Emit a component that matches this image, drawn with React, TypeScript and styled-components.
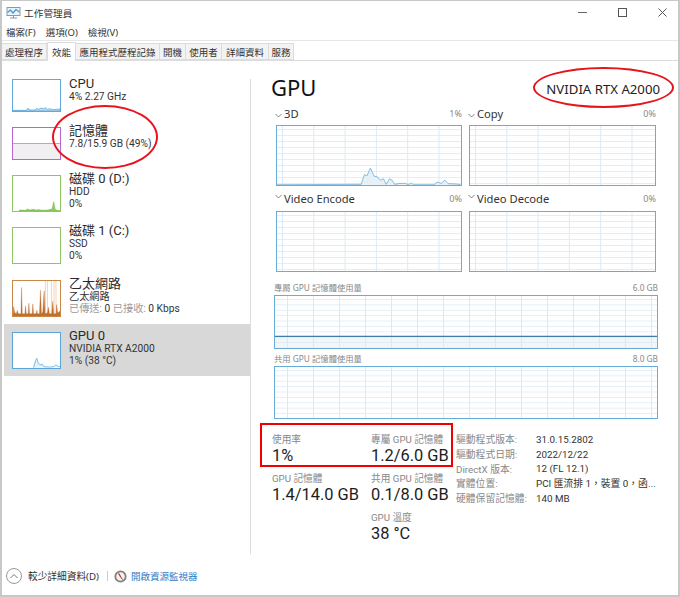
import React from "react";
import styled, { createGlobalStyle } from "styled-components";

const Global = createGlobalStyle`
  html, body { margin: 0; padding: 0; background: #fff; }
  * { box-sizing: border-box; }
  body { font-family: "Noto Sans", "Noto Sans CJK TC", sans-serif; color: #222; }
`;

const compactFont = `Roboto, "Noto Sans CJK TC", sans-serif`;

const Windowed = styled.div`
  position: relative;
  width: 680px;
  height: 597px;
  border: 1px solid #c8c8c8;
  border-width: 1px 2px 2px 2px;
  display: flex;
  flex-direction: column;
  overflow: hidden;
  background: #fff;
`;
const TitleBar = styled.div`
  height: 23px;
  display: flex;
  align-items: center;
  padding: 0 0 0 4px;
  gap: 3px;
  font-size: 9.6px;
  color: #333;
`;
const TitleText = styled.span`
  flex: 1;
  letter-spacing: 0.1px;
`;
const WinButton = styled.span`
  width: 37px;
  padding-left: 5px;
  display: flex;
  justify-content: center;
  color: #555;
`;
const MenuBar = styled.div`
  height: 16px;
  display: flex;
  align-items: center;
  gap: 10px;
  padding-left: 4px;
  font-size: 9.5px;
  color: #333;
  border-bottom: 1px solid #e6e6e6;
  box-sizing: content-box;
  padding-bottom: 0;
`;
const TabBar = styled.div`
  height: 20px;
  display: flex;
  align-items: flex-end;
  border-bottom: 1px solid #dcdcdc;
  padding-left: 0;
`;
const Tab = styled.div<{ $active?: boolean; $w: number }>`
  width: ${(p) => p.$w}px;
  height: ${(p) => (p.$active ? 19 : 17)}px;
  margin-bottom: ${(p) => (p.$active ? -1 : 0)}px;
  background: ${(p) => (p.$active ? "#fff" : "#f3f3f3")};
  border: 1px solid #dcdcdc;
  border-left-width: ${(p) => (p.$active ? 1 : 0)}px;
  border-bottom-width: ${(p) => (p.$active ? 0 : 1)}px;
  font-size: 9.5px;
  color: #333;
  display: flex;
  align-items: center;
  justify-content: center;
  white-space: nowrap;
`;
const Body = styled.div`
  flex: 1;
  display: flex;
  min-height: 0;
`;
const Sidebar = styled.div`
  width: 248px;
  padding: 11px 0 0 2px;
  display: flex;
  flex-direction: column;
`;
const Row = styled.div<{ $h: number; $selected?: boolean }>`
  height: ${(p) => p.$h}px;
  display: flex;
  align-items: center;
  gap: 8px;
  padding-left: 8px;
  background: ${(p) => (p.$selected ? "#d8d8d8" : "transparent")};
`;
const Thumb = styled.div<{ $c: string; $h: number }>`
  width: 49px;
  height: ${(p) => p.$h}px;
  border: 1px solid ${(p) => p.$c};
  background: #fff;
  flex: none;
  svg { display: block; width: 100%; height: 100%; }
`;
const RowText = styled.div`
  display: flex;
  flex-direction: column;
  min-width: 0;
  align-self: flex-start;
  padding-top: 4px;
  font-family: ${compactFont};
`;
const RowName = styled.div`
  font-size: 13px;
  line-height: 15px;
  color: #2a2a2a;
`;
const RowSub = styled.div`
  font-size: 10.2px;
  line-height: 12.4px;
  color: #333;
  white-space: nowrap;
`;
const Muted = styled.span`
  color: #999;
`;
const Divider = styled.div`
  width: 1px;
  height: 475px;
  margin-top: 18px;
  background: #dcdcdc;
  flex: none;
`;
const Main = styled.div`
  flex: 1;
  padding: 7px 18px 0 20px;
  display: flex;
  flex-direction: column;
`;
const Header = styled.div`
  height: 38px;
  display: flex;
  justify-content: space-between;
  align-items: center;
`;
const Heading = styled.div`
  font-size: 22px;
  color: #111;
  line-height: 30px;
`;
const Adapter = styled.div`
  font-size: 13.2px;
  color: #222;
  padding-top: 3px;
`;
const ChartGrid = styled.div`
  display: grid;
  grid-template-columns: 186px 187px;
  column-gap: 7px;
  margin-left: 5px;
`;
const ChartHead = styled.div<{ $tall?: boolean }>`
  height: ${(p) => (p.$tall ? 25 : 19)}px;
  display: flex;
  align-items: ${(p) => (p.$tall ? "flex-end" : "flex-start")};
  padding-bottom: ${(p) => (p.$tall ? 5 : 0)}px;
  margin-left: -1px;
  gap: 2px;
  font-size: 11.2px;
  line-height: 15px;
  color: #333;
`;
const ChevronBox = styled.span`
  display: flex;
  align-self: center;
`;
const ChartName = styled.span`
  flex: 1;
`;
const Pct = styled.span`
  font-size: 9px;
  color: #888;
`;
const Chart = styled.div<{ $h: number; $cx: number; $cy: number; $ox: number }>`
  height: ${(p) => p.$h}px;
  border: 1px solid #68acd8;
  background-color: #fff;
  background-image:
    linear-gradient(to right, #d9eaf6 1px, transparent 1px),
    linear-gradient(to bottom, #e1eef8 1px, transparent 1px);
  background-size: ${(p) => p.$cx}px 100%, 100% ${(p) => p.$cy}px;
  background-position: ${(p) => p.$ox}px 0, 0 3px;
  svg { display: block; width: 100%; height: 100%; }
`;
const WideHead = styled.div`
  display: flex;
  justify-content: space-between;
  align-items: flex-end;
  height: 16px;
  padding-bottom: 2px;
  font-size: 8.3px;
  color: #888;
`;
const WideGroup = styled.div<{ $mt: number }>`
  margin: ${(p) => p.$mt}px 2px 0 3px;
`;
const Stats = styled.div`
  margin-top: 14px;
  margin-left: 1px;
  display: flex;
  font-family: ${compactFont};
`;
const StatGrid = styled.div`
  width: 184px;
  display: grid;
  grid-template-columns: 99px 85px;
  grid-auto-rows: 39px;
`;
const Stat = styled.div`
  display: flex;
  flex-direction: column;
`;
const StatLabel = styled.div`
  font-size: 9.7px;
  line-height: 13px;
  color: #888;
  white-space: nowrap;
`;
const StatValue = styled.div`
  font-size: 16.4px;
  line-height: 19px;
  color: #1c1c1c;
  white-space: nowrap;
`;
const Info = styled.div`
  display: grid;
  grid-template-columns: 80px 1fr;
  grid-auto-rows: 14.7px;
  font-size: 9.8px;
  align-items: center;
  margin-top: -1px;
`;
const InfoKey = styled.div`
  color: #888;
  white-space: nowrap;
`;
const InfoVal = styled.div`
  color: #333;
  white-space: nowrap;
`;
const Footer = styled.div`
  height: 38px;
  display: flex;
  align-items: center;
  padding: 0 0 0 4px;
  font-size: 9.7px;
  color: #333;
  flex: none;
`;
const ExpandCircle = styled.span`
  width: 16px;
  height: 16px;
  border: 1px solid #999;
  border-radius: 50%;
  display: flex;
  align-items: center;
  justify-content: center;
  margin-right: 6px;
`;
const FootSep = styled.span`
  width: 1px;
  height: 10px;
  background: #ccc;
  margin: 0 6px 0 8px;
`;
const FootLink = styled.span`
  color: #2f79c4;
  font-size: 9.5px;
  margin-left: 4px;
`;
const Ellipse = styled.div<{ $x: number; $y: number; $w: number; $h: number }>`
  position: absolute;
  left: ${(p) => p.$x}px;
  top: ${(p) => p.$y}px;
  width: ${(p) => p.$w}px;
  height: ${(p) => p.$h}px;
  border: 2px solid #e8141c;
  border-radius: 50%;
`;
const RedBox = styled.div`
  position: absolute;
  left: 258px;
  top: 422px;
  width: 193px;
  height: 44px;
  border: 2px solid #f00000;
`;

const Chevron = () => (
  <ChevronBox>
    <svg width="7" height="7" viewBox="0 0 7 7" fill="none" stroke="#777" strokeWidth="0.9">
      <path d="M0.5 2 L3.5 5 L6.5 2" />
    </svg>
  </ChevronBox>
);

const spark3d =
  "M47 376 L302 375 L312 345 L320 348 L330 325 L342 350 L352 352 L360 362 L370 358 L378 375 L388 358 L396 362 L404 375 L420 372 L436 372 L445 376 L455 371 L460 376 L525 376 L532 368 L545 372 L556 362 L566 373 L590 374 L604 376";

const Thumbs = {
  cpu: (
    <svg viewBox="0 0 142 94" preserveAspectRatio="none">
      <path d="M0 92 L40 92 L46 85 L50 91 L66 91 L72 86 L78 89 L84 85 L92 87 L98 84 L104 89 L112 87 L120 90 L142 88 L142 94 L0 94 Z" fill="#bcdcf0" stroke="#4a9fd4" strokeWidth="2" />
    </svg>
  ),
  mem: (
    <svg viewBox="0 0 142 94" preserveAspectRatio="none">
      <rect x="0" y="47" width="142" height="47" fill="#f2eff3" />
      <path d="M0 47 L142 47" stroke="#b267cb" strokeWidth="2" fill="none" />
    </svg>
  ),
  disk0: (
    <svg viewBox="0 0 142 106" preserveAspectRatio="none">
      <path d="M18 105 L22 103 L38 104 L44 100 L50 103 L62 101 L68 103 L78 102 L90 104 L105 103 L118 100 L123 78 L127 100 L132 104 L142 105 L142 106 L18 106 Z" fill="#8fcb5e" stroke="#6fb83f" strokeWidth="1.5" />
    </svg>
  ),
  disk1: <svg viewBox="0 0 142 106" />,
  eth: (
    <svg viewBox="0 0 142 107" preserveAspectRatio="none">
      <path d="M98 0 V107 M104 0 V107 M116 0 V107 M124 0 V107 M130 0 V107" stroke="#eebd95" strokeWidth="2" fill="none" />
      <path
        d="M0 107 L2 78 L5 96 L10 100 L13 90 L16 100 L24 100 L26 20 L28 100 L36 100 L38 76 L40 100 L46 100 L48 68 L50 100 L58 100 L60 70 L62 100 L70 100 L72 90 L74 100 L80 100 L83 28 L86 100 L90 95 L94 30 L97 100 L104 98 L107 80 L110 100 L117 100 L120 62 L123 100 L130 100 L132 72 L135 98 L142 92 L142 107 Z"
        fill="#c3702c"
        stroke="#b9652a"
        strokeWidth="1"
      />
    </svg>
  ),
  gpu: (
    <svg viewBox="0 0 142 108" preserveAspectRatio="none">
      <path d="M62 107 L68 85 L72 78 L76 92 L82 98 L88 96 L94 104 L110 105 L124 104 L130 98 L134 102 L142 105" fill="#e3f0f9" stroke="#4a9fd4" strokeWidth="2" />
    </svg>
  ),
};

const items = [
  { h: 47, th: 33, c: "#62a9da", t: Thumbs.cpu, name: "CPU", subs: ["4%  2.27 GHz"] },
  { h: 48, th: 33, c: "#b867d0", t: Thumbs.mem, name: "記憶體", subs: ["7.8/15.9 GB (49%)"] },
  { h: 52, th: 37, c: "#8cc764", t: Thumbs.disk0, name: "磁碟 0 (D:)", subs: ["HDD", "0%"] },
  { h: 53, th: 37, c: "#8cc764", t: Thumbs.disk1, name: "磁碟 1 (C:)", subs: ["SSD", "0%"] },
  { h: 52, th: 37, c: "#c98748", t: Thumbs.eth, name: "乙太網路", subs: ["乙太網路"], eth: true },
  { h: 52, th: 37, c: "#5aa6d8", t: Thumbs.gpu, name: "GPU 0", subs: ["NVIDIA RTX A2000", "1%  (38 °C)"], selected: true },
];

const engines = [
  { name: "3D", pct: "1%", spark: true },
  { name: "Copy", pct: "0%" },
  { name: "Video Encode", pct: "0%" },
  { name: "Video Decode", pct: "0%" },
];

const stats = [
  ["使用率", "1%"],
  ["專屬 GPU 記憶體", "1.2/6.0 GB"],
  ["GPU 記憶體", "1.4/14.0 GB"],
  ["共用 GPU 記憶體", "0.1/8.0 GB"],
  ["", ""],
  ["GPU 溫度", "38 °C"],
];

const info = [
  ["驅動程式版本:", "31.0.15.2802"],
  ["驅動程式日期:", "2022/12/22"],
  ["DirectX 版本:", "12 (FL 12.1)"],
  ["實體位置:", "PCI 匯流排 1，裝置 0，函..."],
  ["硬體保留記憶體:", "140 MB"],
];

const tabs: [string, number, boolean?][] = [
  ["處理程序", 45],
  ["效能", 29, true],
  ["應用程式歷程記錄", 84],
  ["開機", 26],
  ["使用者", 36],
  ["詳細資料", 47],
  ["服務", 25],
];

export default function App() {
  return (
    <>
      <Global />
      <Windowed>
        <TitleBar>
          <svg width="15" height="13" viewBox="0 0 15 13" fill="none">
            <rect x="1" y="1.5" width="13" height="8" fill="#eaf3fa" stroke="#8a9aa6" strokeWidth="1" />
            <path d="M1.5 6.5 L4.5 4 L7 7 L10 3.5 L13.5 6" stroke="#3f96d2" strokeWidth="1.2" />
            <path d="M4 12 H11 M7.5 9.5 V12" stroke="#8a9aa6" strokeWidth="1" />
          </svg>
          <TitleText>工作管理員</TitleText>
          <WinButton>
            <svg width="9" height="9" viewBox="0 0 9 9"><path d="M0 4.5 H9" stroke="#666" strokeWidth="1" /></svg>
          </WinButton>
          <WinButton>
            <svg width="9" height="9" viewBox="0 0 9 9" fill="none"><rect x="0.5" y="0.5" width="8" height="8" stroke="#555" strokeWidth="1" /></svg>
          </WinButton>
          <WinButton>
            <svg width="9" height="9" viewBox="0 0 9 9" fill="none"><path d="M0.5 0.5 L8.5 8.5 M8.5 0.5 L0.5 8.5" stroke="#555" strokeWidth="1" /></svg>
          </WinButton>
        </TitleBar>
        <MenuBar>
          <span>檔案(F)</span>
          <span>選項(O)</span>
          <span>檢視(V)</span>
        </MenuBar>
        <TabBar>
          {tabs.map(([label, w, active]) => (
            <Tab key={label} $w={w} $active={active}>{label}</Tab>
          ))}
        </TabBar>
        <Body>
          <Sidebar>
            {items.map((it) => (
              <Row key={it.name} $h={it.h} $selected={it.selected}>
                <Thumb $c={it.c} $h={it.th}>{it.t}</Thumb>
                <RowText>
                  <RowName>{it.name}</RowName>
                  {it.subs.map((s) => <RowSub key={s}>{s}</RowSub>)}
                  {it.eth && (
                    <RowSub><Muted>已傳送:</Muted> 0 <Muted>已接收:</Muted> 0 Kbps</RowSub>
                  )}
                </RowText>
              </Row>
            ))}
          </Sidebar>
          <Divider />
          <Main>
            <Header>
              <Heading>GPU</Heading>
              <Adapter>NVIDIA RTX A2000</Adapter>
            </Header>
            <ChartGrid>
              {engines.map((e, i) => (
                <div key={e.name}>
                  <ChartHead $tall={i > 1}>
                    <Chevron />
                    <ChartName>{e.name}</ChartName>
                    <Pct>{e.pct}</Pct>
                  </ChartHead>
                  <Chart $h={61} $cx={31.3} $cy={6} $ox={5}>
                    {e.spark && (
                      <svg viewBox="47 195 558 182" preserveAspectRatio="none">
                        <path d={spark3d} fill="#e6f0f7" stroke="#4f9fd4" strokeWidth="2" />
                      </svg>
                    )}
                  </Chart>
                </div>
              ))}
            </ChartGrid>
            <WideGroup $mt={7}>
              <WideHead><span>專屬 GPU 記憶體使用量</span><span>6.0 GB</span></WideHead>
              <Chart $h={54} $cx={26} $cy={5.4} $ox={12}>
                <svg viewBox="0 0 384 54" preserveAspectRatio="none">
                  <rect x="0" y="42" width="384" height="12" fill="#dfe9f1" fillOpacity="0.4" />
                  <path d="M0 42 H384" stroke="#3f7ea8" strokeWidth="1.2" />
                </svg>
              </Chart>
            </WideGroup>
            <WideGroup $mt={1}>
              <WideHead><span>共用 GPU 記憶體使用量</span><span>8.0 GB</span></WideHead>
              <Chart $h={53} $cx={26} $cy={5.4} $ox={12} />
            </WideGroup>
            <Stats>
              <StatGrid>
                {stats.map(([l, v], i) => (
                  <Stat key={i}>
                    <StatLabel>{l}</StatLabel>
                    <StatValue>{v}</StatValue>
                  </Stat>
                ))}
              </StatGrid>
              <Info>
                {info.map(([k, v]) => (
                  <React.Fragment key={k}>
                    <InfoKey>{k}</InfoKey>
                    <InfoVal>{v}</InfoVal>
                  </React.Fragment>
                ))}
              </Info>
            </Stats>
          </Main>
        </Body>
        <Footer>
          <ExpandCircle>
            <svg width="8" height="6" viewBox="0 0 8 6" fill="none" stroke="#777" strokeWidth="1"><path d="M0.5 5 L4 1.5 L7.5 5" /></svg>
          </ExpandCircle>
          <span>較少詳細資料(D)</span>
          <FootSep />
          <svg width="13" height="13" viewBox="0 0 13 13" fill="none">
            <circle cx="6.5" cy="6.5" r="5.2" fill="#f4f2ee" stroke="#808080" strokeWidth="1.8" />
            <path d="M4.6 3.4 L6.8 7" stroke="#d2302a" strokeWidth="1.3" />
            <path d="M6.8 7 L8.4 9.6" stroke="#555" strokeWidth="1" />
          </svg>
          <FootLink>開啟資源監視器</FootLink>
        </Footer>
        <Ellipse $x={50} $y={104} $w={106} $h={64} />
        <Ellipse $x={531} $y={66} $w={141} $h={41} />
        <RedBox />
      </Windowed>
    </>
  );
}
